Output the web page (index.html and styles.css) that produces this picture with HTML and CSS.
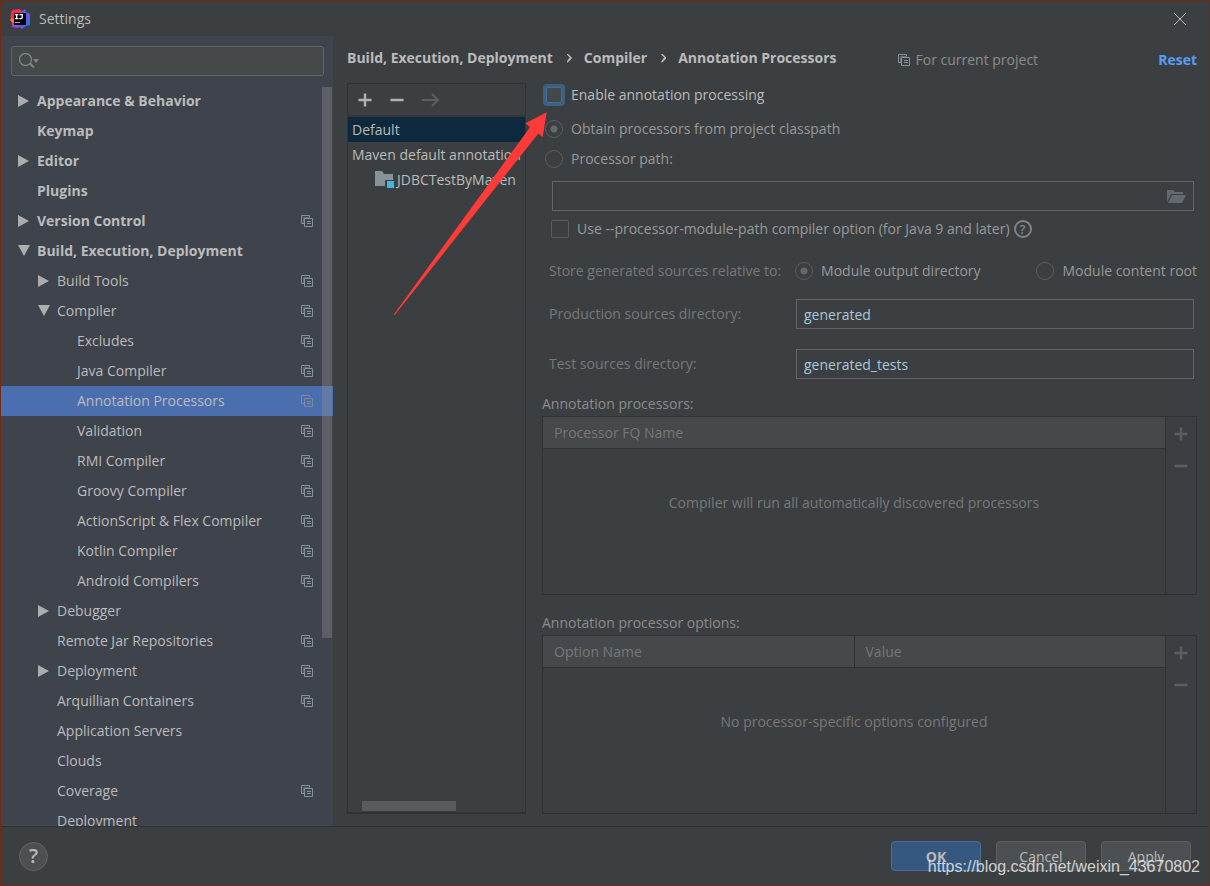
FILE: index.html
```html
<!DOCTYPE html>
<html lang="en">
<head>
<meta charset="utf-8">
<title>Settings</title>
<link rel="stylesheet" href="styles.css">
</head>
<body>
<svg class="sprite" aria-hidden="true">
  <symbol id="i-project" viewBox="0 0 12 12"><path fill="none" stroke="#87939a" d="M3 8.500H.5v-8h8V2"/><path fill="none" stroke="#626d75" d="M2.500 8V2.500H9"/><path fill="none" stroke="#87939a" d="M3.500 3.500h8v8h-8zM6 6.500h4M6 8.500h4"/></symbol>
  <symbol id="i-plus" viewBox="0 0 14 14"><path stroke="currentColor" stroke-width="2.500" d="M7 .5v13M.5 7h13"/></symbol>
  <symbol id="i-minus" viewBox="0 0 14 14"><path stroke="currentColor" stroke-width="2.500" d="M.5 7h13"/></symbol>
</svg>
<div class="window">
  <header class="titlebar">
    <svg class="logo" viewBox="0 0 20 20" aria-hidden="true">
      <defs><linearGradient id="lg" x1="0" y1="0" x2="1" y2="1"><stop offset="0" stop-color="#2f6ff2"/><stop offset=".5" stop-color="#6a55e8"/><stop offset="1" stop-color="#2277f0"/></linearGradient></defs>
      <path fill="#f97a12" d="M0 11l3-4 3 3-3 5z"/>
      <path fill="#fe2857" d="M2 1l8-1 3 4-7 7-6-3z"/>
      <path fill="#b13bd8" d="M2 14l9-1-1 4-2 2-6-1z"/>
      <path fill="url(#lg)" d="M11 3l4-3 1 3 4 2v11l-4 1-4 3-4-3z"/>
      <rect x="4" y="4" width="12" height="12" fill="#060606"/>
      <path stroke="#fff" stroke-width="1.300" fill="none" d="M5 5.600h3.400M6.700 5.600v4M5 9.700h3.400M9.500 5.600h2.700v3q0 1.100-1.200 1.100H9.300"/><path stroke="#aaa" d="M5 13.500h5"/>
    </svg>
    <h1 class="title">Settings</h1>
    <button class="close" aria-label="Close"><svg viewBox="0 0 12 12"><path stroke="currentColor" d="M0 0l12 12M12 0L0 12"/></svg></button>
  </header>
  <div class="body">
    <nav class="sidebar" aria-label="Settings categories">
      <div class="search">
        <svg viewBox="0 0 20 16" aria-hidden="true"><circle cx="6.500" cy="6.500" r="6" fill="none" stroke="#7c8587" stroke-width="1.300"/><path stroke="#7c8587" stroke-width="2" d="M11 10.500l4 4"/><path fill="#7c8587" d="M14 6h6l-3 4z"/></svg>
        <input type="search" aria-label="Search settings">
      </div>
      <div class="tree-wrap">
        <ul class="tree" id="tree">
          <li><button class="node l0 closed">Appearance &amp; Behavior</button></li>
          <li><button class="node l0">Keymap</button></li>
          <li><button class="node l0 closed">Editor</button></li>
          <li><button class="node l0">Plugins</button></li>
          <li><button class="node l0 closed">Version Control<svg class="pj"><use href="#i-project"/></svg></button></li>
          <li><button class="node l0 open">Build, Execution, Deployment</button></li>
          <li><button class="node l1 closed">Build Tools<svg class="pj"><use href="#i-project"/></svg></button></li>
          <li><button class="node l1 open">Compiler<svg class="pj"><use href="#i-project"/></svg></button></li>
          <li><button class="node l2">Excludes<svg class="pj"><use href="#i-project"/></svg></button></li>
          <li><button class="node l2">Java Compiler<svg class="pj"><use href="#i-project"/></svg></button></li>
          <li><button class="node l2 selected">Annotation Processors<svg class="pj"><use href="#i-project"/></svg></button></li>
          <li><button class="node l2">Validation<svg class="pj"><use href="#i-project"/></svg></button></li>
          <li><button class="node l2">RMI Compiler<svg class="pj"><use href="#i-project"/></svg></button></li>
          <li><button class="node l2">Groovy Compiler<svg class="pj"><use href="#i-project"/></svg></button></li>
          <li><button class="node l2">ActionScript &amp; Flex Compiler<svg class="pj"><use href="#i-project"/></svg></button></li>
          <li><button class="node l2">Kotlin Compiler<svg class="pj"><use href="#i-project"/></svg></button></li>
          <li><button class="node l2">Android Compilers<svg class="pj"><use href="#i-project"/></svg></button></li>
          <li><button class="node l1 closed">Debugger</button></li>
          <li><button class="node l1">Remote Jar Repositories<svg class="pj"><use href="#i-project"/></svg></button></li>
          <li><button class="node l1 closed">Deployment<svg class="pj"><use href="#i-project"/></svg></button></li>
          <li><button class="node l1">Arquillian Containers<svg class="pj"><use href="#i-project"/></svg></button></li>
          <li><button class="node l1">Application Servers</button></li>
          <li><button class="node l1">Clouds</button></li>
          <li><button class="node l1">Coverage<svg class="pj"><use href="#i-project"/></svg></button></li>
          <li><button class="node l1">Deployment</button></li>
        </ul>
        <div class="vthumb"></div>
      </div>
    </nav>
    <main class="main">
      <div class="crumbs">
        <ol class="path"><li>Build, Execution, Deployment</li><li>Compiler</li><li>Annotation Processors</li></ol>
        <span class="scope"><svg class="pj"><use href="#i-project"/></svg>For current project</span>
        <a class="reset" href="#reset">Reset</a>
      </div>
      <div class="content">
        <section class="profiles" aria-label="Profiles">
          <div class="toolbar">
            <button aria-label="Add"><svg><use href="#i-plus"/></svg></button>
            <button aria-label="Remove"><svg><use href="#i-minus"/></svg></button>
            <button aria-label="Move to" disabled><svg class="arrow" viewBox="0 0 18 14"><path fill="none" stroke="currentColor" stroke-width="2" d="M0 7h16M10 1l6 6-6 6"/></svg></button>
          </div>
          <ul class="profile-list">
            <li class="current">Default</li>
            <li>Maven default annotation</li>
            <li class="module"><svg viewBox="0 0 20 18" aria-hidden="true"><path fill="#87939a" d="M0 0h7l2 3h9v6h-8v6H0z"/><path fill="#40b6e0" d="M12 10h7v7h-7z"/></svg>JDBCTestByMaven</li>
          </ul>
          <div class="hthumb"></div>
        </section>
        <form class="form">
          <label class="check main-check"><input type="checkbox">Enable annotation processing</label>
          <label class="check source"><input type="radio" name="src" checked disabled>Obtain processors from project classpath</label>
          <label class="check source"><input type="radio" name="src" disabled>Processor path:</label>
          <div class="path-field"><input type="text" class="field" aria-label="Processor path" disabled>
            <button type="button" aria-label="Browse" disabled><svg viewBox="0 0 19 15"><path fill="#616b6f" d="M0 1h6l2 2h8v2H4L0 13z"/><path fill="#616b6f" d="M5 6h14l-4 8H1z"/></svg></button></div>
          <div class="module-path"><label class="check"><input type="checkbox" disabled>Use --processor-module-path compiler option (for Java 9 and later)</label><button type="button" class="hint" aria-label="Help">?</button></div>
          <div class="store" role="radiogroup" aria-labelledby="st"><span id="st" class="dim">Store generated sources relative to:</span>
            <label class="check"><input type="radio" name="rel" checked disabled>Module output directory</label>
            <label class="check last"><input type="radio" name="rel" disabled>Module content root</label></div>
          <div class="dir"><label for="prod">Production sources directory:</label><input id="prod" class="field" type="text" value="generated"></div>
          <div class="dir"><label for="test">Test sources directory:</label><input id="test" class="field" type="text" value="generated_tests"></div>
          <h2 class="caption">Annotation processors:</h2>
          <div class="grid">
            <div class="grid-main"><table><thead><tr><th>Processor FQ Name</th></tr></thead></table><p class="empty">Compiler will run all automatically discovered processors</p></div>
            <div class="grid-tools"><button type="button" aria-label="Add processor" disabled><svg><use href="#i-plus"/></svg></button><button type="button" aria-label="Remove processor" disabled><svg><use href="#i-minus"/></svg></button></div>
          </div>
          <h2 class="caption second">Annotation processor options:</h2>
          <div class="grid">
            <div class="grid-main"><table><thead><tr><th>Option Name</th><th>Value</th></tr></thead></table><p class="empty">No processor-specific options configured</p></div>
            <div class="grid-tools"><button type="button" aria-label="Add option" disabled><svg><use href="#i-plus"/></svg></button><button type="button" aria-label="Remove option" disabled><svg><use href="#i-minus"/></svg></button></div>
          </div>
        </form>
      </div>
    </main>
  </div>
  <footer class="footer">
    <button class="help" aria-label="Help">?</button>
    <button class="btn primary">OK</button><button class="btn">Cancel</button><button class="btn">Apply</button>
  </footer>
  <svg class="pointer" viewBox="0 0 154 204" aria-hidden="true"><path fill="#ff3b39" d="M153.700 1.300l-4 24.600-4.400-3.400L1.800 204l-1-.6L137 16.300l-4.500-4z"/></svg>
  <span class="watermark">https://blog.csdn.net/weixin_43670802</span>
</div>
</body>
</html>
```
FILE: styles.css
```css
* { box-sizing: border-box; }
body { margin: 0; background: #3c3f41; color: #bbb; font: 14px/20px "Open Sans", "Noto Sans", sans-serif; }
button, input { font: inherit; color: inherit; }
button { padding: 0; border: 0; background: none; }
ul, ol { margin: 0; padding: 0; list-style: none; }
.sprite { position: absolute; width: 0; height: 0; }

.window { position: relative; display: flex; flex-direction: column; height: 100vh; min-height: 640px; border: 1px solid #6f2a14; }
.titlebar { display: flex; align-items: center; gap: 9px; height: 35px; padding: 0 23px 0 9px; flex: none; }
.logo { width: 20px; height: 20px; }
.title { flex: 1; margin: 0; font-size: 14px; font-weight: 400; }
.close { display: flex; }
.close svg { width: 12px; height: 12px; }

.body { display: flex; flex: 1; min-height: 0; }
.sidebar { display: flex; flex-direction: column; width: 332px; flex: none; background: #3f434c; }
.search { display: flex; align-items: center; gap: 4px; height: 30px; margin: 10px 9px 10px 10px; padding: 0 7px; border: 1px solid #646464; border-radius: 3px; background: #45494a; flex: none; }
.search svg { width: 20px; height: 16px; flex: none; }
.search input { flex: 1; min-width: 0; border: 0; outline: 0; background: none; }
.tree-wrap { position: relative; flex: 1; min-height: 0; overflow: hidden; }
.tree { height: 100%; overflow: hidden; }
.node { position: relative; display: flex; align-items: center; width: 100%; height: 30px; padding-right: 20px; text-align: left; }
.l0 { padding-left: 36px; font-weight: 700; }
.l1 { padding-left: 56px; }
.l2 { padding-left: 76px; }
.closed::before, .open::before { content: ""; width: 12px; height: 12px; margin-left: -19px; margin-right: 7px; background: #adadad; }
.closed::before { clip-path: polygon(0 0, 11px 6px, 0 12px); }
.open::before { clip-path: polygon(0 0, 12px 0, 6px 11px); }
.selected { background: #4b6eaf; }
.pj { width: 12px; height: 12px; margin-left: auto; flex: none; }
.selected .pj { opacity: .8; }
.vthumb { position: absolute; top: 1px; right: 1px; width: 10px; height: 551px; background: rgba(145, 145, 150, .36); }

.main { display: flex; flex-direction: column; flex: 1; min-width: 0; padding: 6px 12px 12px 14px; }
.crumbs { display: flex; align-items: center; height: 41px; padding-bottom: 9px; flex: none; }
.path { display: flex; font-weight: 700; white-space: nowrap; }
.path li { display: flex; align-items: center; }
.path li + li::before { content: ""; width: 5px; height: 9px; margin: 0 12px 0 14px; background: #bbb; clip-path: polygon(0 0, 1px 0, 5px 4px, 5px 5px, 1px 9px, 0 9px, 0 8px, 3px 4px, 0 1px); }
.scope { display: flex; align-items: center; gap: 5px; padding-top: 4px; margin-left: 62px; color: #8c8c8c; white-space: nowrap; }
.reset { padding-top: 4px; margin-left: auto; color: #589df6; font-weight: 700; text-decoration: none; }
.content { display: flex; flex: 1; gap: 16px; min-height: 0; }

.profiles { display: flex; flex-direction: column; width: 179px; flex: none; border: 1px solid #323232; border-bottom-width: 2px; overflow: hidden; }
.toolbar { display: flex; align-items: center; gap: 18px; height: 33px; padding-left: 10px; border-bottom: 2px solid #333537; flex: none; }
.toolbar button { display: flex; color: #afb1b3; }
.toolbar svg { width: 14px; height: 14px; }
.toolbar .arrow { width: 18px; }
.toolbar button:disabled { color: #5c5e60; }
.profile-list { flex: 1; }
.profile-list li { display: flex; align-items: center; height: 25px; padding-left: 4px; white-space: nowrap; overflow: hidden; }
.profile-list .current { background: #0d293e; }
.profile-list .module { gap: 2px; padding-left: 27px; }
.module svg { width: 20px; height: 18px; flex: none; }
.hthumb { width: 94px; height: 10px; margin: 0 0 1px 14px; background: #595a5c; }

.form { display: flex; flex-direction: column; flex: 1; min-width: 0; }
.check { display: flex; align-items: center; gap: 8px; white-space: nowrap; }
.check input { appearance: none; width: 18px; height: 18px; margin: 0; border: 1px solid #5a5c5e; border-radius: 2px; flex: none; }
.check input[type=radio] { border-radius: 50%; }
.check input[type=radio]:checked { background: radial-gradient(circle, #66696b 3px, transparent 4px); }
.main-check { gap: 9px; height: 24px; padding-left: 4px; }
.main-check input { width: 16px; height: 16px; border-color: #466d94; border-radius: 1px; background: #43494a; outline: 3px solid #3d6185; }
.source { height: 30px; padding-left: 3px; color: #999; }
.main-check + .source { margin-top: 7px; }
.field { width: 100%; height: 30px; padding: 0 7px; border: 1px solid #646464; background: none; color: #a9c8dc; outline: 0; }
.path-field { display: flex; align-items: center; height: 30px; margin: 7px 3px 0 10px; border: 1px solid #646464; flex: none; }
.path-field .field { border: 0; height: 28px; }
.path-field button { display: flex; margin-right: 7px; }
.path-field svg { width: 19px; height: 15px; }
.module-path { display: flex; align-items: center; gap: 4px; height: 36px; padding-left: 9px; color: #999; }
.hint { width: 18px; height: 18px; border: 2px solid #7f8587; border-radius: 50%; color: #7f8587; font-size: 13px; line-height: 14px; font-weight: 600; }
.store { display: flex; align-items: center; height: 46px; padding: 2px 0 0 7px; color: #999; }
.store .check { margin-left: 14px; }
.store .last { margin-left: auto; }
.dim, .dir label, .caption, .empty, th { color: #787878; }
.dir { display: grid; grid-template-columns: 247px 1fr; align-items: center; height: 30px; margin: 6px 3px 0 7px; }
.dir + .dir { margin-top: 20px; }
.caption { margin: 15px 0 2px; font-size: 14px; font-weight: 400; color: #8c8c8c; }
.second { margin-top: 18px; }
.grid { display: flex; flex: 1; min-height: 90px; border: 1px solid #323232; }
.grid-main { flex: 1; min-width: 0; }
.grid-tools { display: flex; flex-direction: column; align-items: center; gap: 18px; width: 31px; padding-top: 10px; border-left: 1px solid #323232; color: #5c5e60; }
.grid-tools button { display: flex; }
.grid-tools svg { width: 14px; height: 14px; }
table { width: 100%; border-collapse: collapse; table-layout: fixed; }
th { height: 31px; padding: 2px 0 0 11px; border-bottom: 1px solid #323232; background: #45494b; font-weight: 400; text-align: left; }
th + th { border-left: 1px solid #323232; }
.empty { margin: 44px 0 0; text-align: center; }

.footer { display: flex; align-items: center; gap: 15px; height: 59px; padding: 0 18px; border-top: 1px solid #323232; flex: none; }
.help { width: 29px; height: 29px; margin-right: auto; border: 1px solid #646464; border-radius: 50%; background: #4c5052; font-size: 20px; font-weight: 600; }
.btn { width: 90px; height: 30px; padding-top: 2px; border: 1px solid #5e6060; border-radius: 4px; background: #4c5052; }
.primary { border-color: #4c708c; background: #365880; font-weight: 700; }
.pointer { position: absolute; left: 392px; top: 110px; width: 154px; height: 204px; pointer-events: none; }
.watermark { position: absolute; right: 9px; bottom: 7px; color: rgba(255, 255, 255, .75); font: 16px/22px "Liberation Sans", Arial, sans-serif; pointer-events: none; }
```
